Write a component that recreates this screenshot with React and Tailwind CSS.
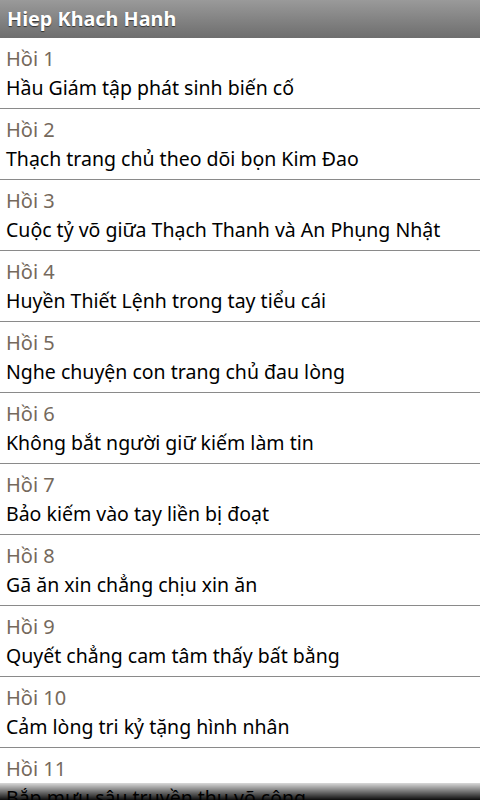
import React from 'react';

const chapters = [
  "Hầu Giám tập phát sinh biến cố",
  "Thạch trang chủ theo dõi bọn Kim Đao",
  "Cuộc tỷ võ giữa Thạch Thanh và An Phụng Nhật",
  "Huyền Thiết Lệnh trong tay tiểu cái",
  "Nghe chuyện con trang chủ đau lòng",
  "Không bắt người giữ kiếm làm tin",
  "Bảo kiếm vào tay liền bị đoạt",
  "Gã ăn xin chẳng chịu xin ăn",
  "Quyết chẳng cam tâm thấy bất bằng",
  "Cảm lòng tri kỷ tặng hình nhân",
  "Bắp mưu sâu truyền thụ võ công",
  "Tiểu cái bị bắt về Trường Lạc bang",
];

export default function App() {
  return (
    <div className="relative h-[800px] w-[480px] overflow-hidden bg-white font-['Noto_Sans',sans-serif]">
      {/* title bar */}
      <div className="h-[38px] bg-gradient-to-b from-[#9a9a9a] to-[#6e6e6e] pl-[7px] text-[19.8px] font-bold leading-[38px] text-white [text-shadow:0_1px_1px_rgba(0,0,0,0.6)]">
        Hiep Khach Hanh
      </div>

      <ul>
        {chapters.map((name, i) => (
          <li key={i}>
            <div className="h-[70px] px-[6px] pt-[6px] leading-[29px]">
              <div className="text-[20px] text-[#75695c]">Hồi {i + 1}</div>
              <div className="whitespace-nowrap text-[19.5px] text-black">{name}</div>
            </div>
            <div className="h-px bg-[#8a8a8a]" />
          </li>
        ))}
      </ul>

      {/* bottom fading edge */}
      <div className="pointer-events-none absolute bottom-0 left-0 right-0 h-[17px] bg-gradient-to-b from-black/15 to-black/95" />
    </div>
  );
}
